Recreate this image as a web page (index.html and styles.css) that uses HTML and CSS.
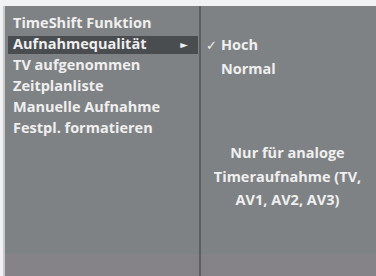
FILE: index.html
```html
<!DOCTYPE html>
<html>
<head>
<meta charset="utf-8">
<link rel="stylesheet" href="styles.css">
</head>
<body>
<div class="screen">
  <div class="panel-left">
    <ul class="menu">
      <li class="item">TimeShift Funktion</li>
      <li class="item selected">Aufnahmequalität<span class="arrow">►</span></li>
      <li class="item">TV aufgenommen</li>
      <li class="item">Zeitplanliste</li>
      <li class="item">Manuelle Aufnahme</li>
      <li class="item">Festpl. formatieren</li>
    </ul>
  </div>
  <div class="divider"></div>
  <div class="panel-right">
    <ul class="options">
      <li class="option"><span class="check">✓</span>Hoch</li>
      <li class="option"><span class="check"></span>Normal</li>
    </ul>
    <p class="note">Nur für analoge<br>Timeraufnahme (TV,<br>AV1, AV2, AV3)</p>
  </div>
</div>
</body>
</html>
```
FILE: styles.css
```css
html, body {
  margin: 0;
  padding: 0;
  width: 376px;
  height: 276px;
  overflow: hidden;
  background: #f2f2f2;
}
body {
  font-family: "Open Sans", "DejaVu Sans", sans-serif;
  font-weight: 700;
  font-size: 14.5px;
  color: #efefef;
}
.screen {
  display: flex;
  margin: 6px 0 0 3px;
  height: 270px;
  border-left: 2px solid #c9cacb;
  background: linear-gradient(#7f8285 0, #7f8285 248px, #858387 248px);
}
.panel-left {
  width: 194px;
  padding: 5.5px 1px 0 3px;
  box-sizing: border-box;
}
.menu, .options {
  list-style: none;
  margin: 0;
  padding: 0;
}
.item {
  position: relative;
  height: 21.2px;
  line-height: 21.2px;
  padding-left: 5px;
  white-space: nowrap;
}
.item.selected {
  background: linear-gradient(transparent 3px, #4a4d4f 3px);
}
.arrow {
  position: absolute;
  right: 10px;
  top: 1px;
  font-size: 10px;
}
.divider {
  width: 2px;
  background: #5c5f62;
}
.panel-right {
  flex: 1;
  padding-top: 27px;
  padding-right: 2px;
}
.option {
  display: flex;
  height: 24px;
  line-height: 24px;
  padding-left: 5px;
}
.check {
  width: 15px;
  font-size: 13px;
}
.note {
  margin: 60px 0 0;
  text-align: center;
  line-height: 23.5px;
}
```
